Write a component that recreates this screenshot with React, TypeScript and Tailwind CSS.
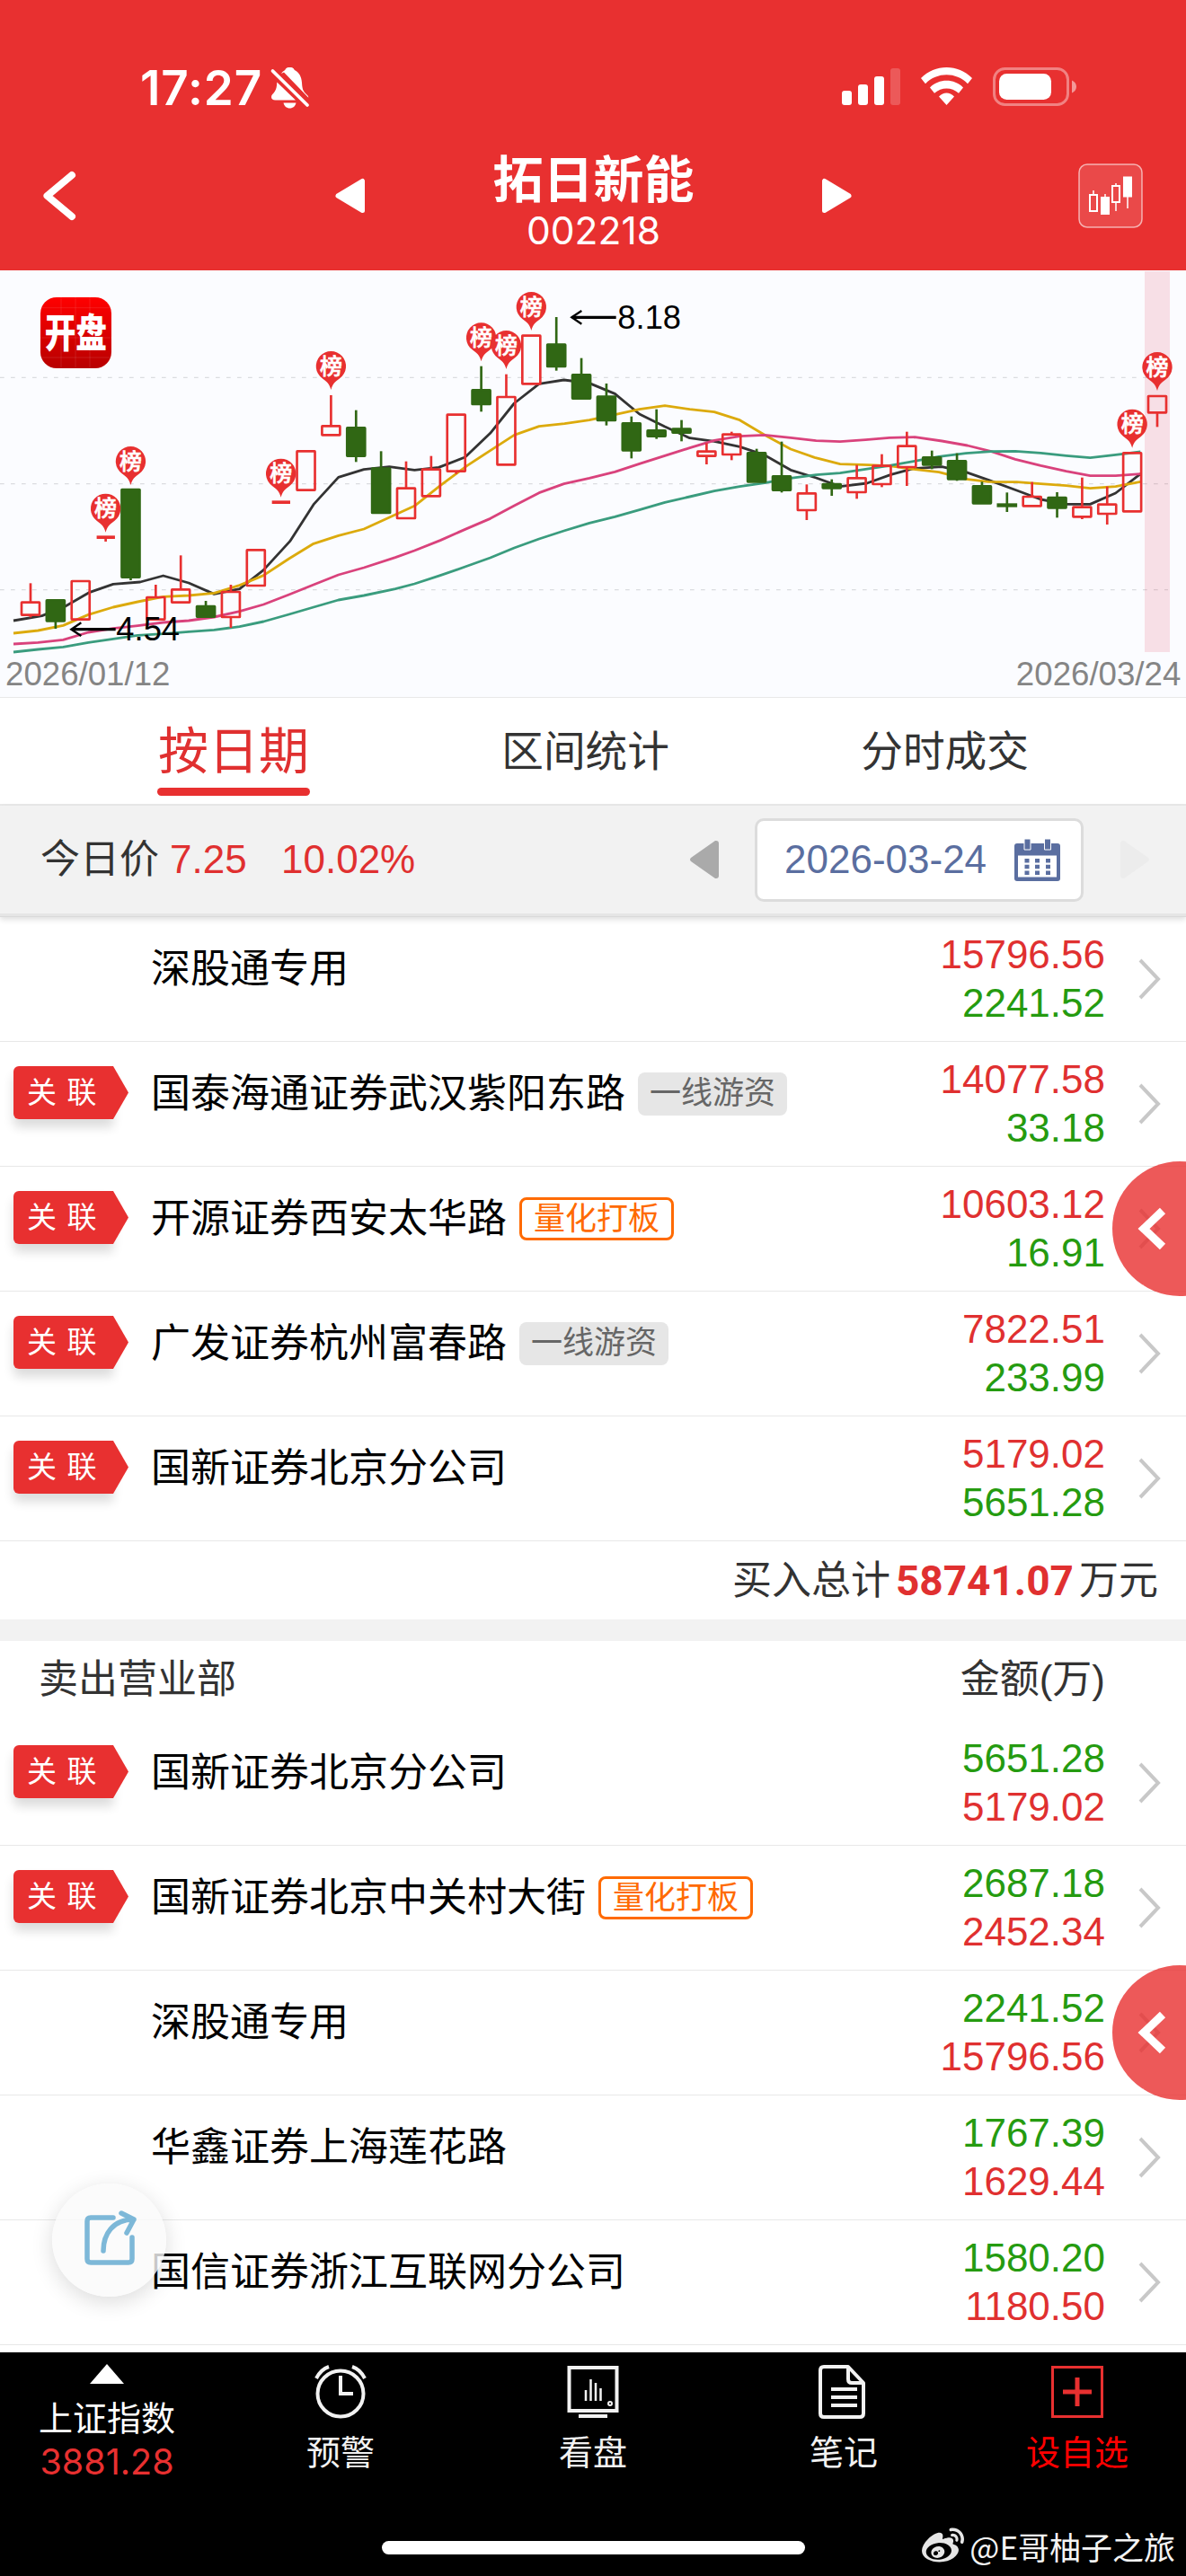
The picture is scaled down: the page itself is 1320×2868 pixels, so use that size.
import type { ReactNode } from 'react'
import { FaWeibo } from 'react-icons/fa'

type Candle = {
  up: boolean
  top: number
  bottom: number
  high?: number
  low?: number
}

type Seat = {
  name: string
  linked?: boolean
  tag?: 'hot' | 'quant'
  main: string
  other: string
}

// chart units are a third of a pixel
const STEP = 83.6
const FIRST = 102

const r = (top: number, bottom: number, high?: number, low?: number): Candle => ({ up: true, top, bottom, high, low })
const g = (top: number, bottom: number, high?: number, low?: number): Candle => ({ up: false, top, bottom, high, low })

const candles: Candle[] = [
  r(1108, 1158, 1048, 1162), g(1101, 1178, 1101, 1200), r(1037, 1173), r(889, 900, 889, 909), g(731, 1032, 731, 1038),
  r(1091, 1173, 1053), r(1065, 1116, 955), g(1121, 1164, 1107), r(1073, 1165, 1053, 1197), r(933, 1060),
  r(772, 783), r(603, 741), r(519, 557, 420), g(525, 627, 470, 643), g(661, 817, 607),
  r(727, 835, 641), r(664, 761, 623), r(481, 678, 481, 683), g(399, 454, 323, 475), r(422, 656, 350),
  r(217, 386), g(247, 328, 159, 338), g(348, 435, 296), g(421, 508, 381, 521), g(510, 608, 491, 631),
  g(534, 561, 467, 566), g(529, 549, 503, 574), r(604, 627, 580, 651), r(547, 622, 542, 637), g(609, 713, 599),
  g(687, 741, 575, 745), r(744, 808, 718, 837), g(713, 734, 701, 756), r(693, 748, 653, 766), r(652, 721, 617, 727),
  r(586, 664, 542, 723), g(624, 656, 605, 667), g(636, 704, 614, 706), g(720, 785, 709), g(781, 794, 745, 810),
  r(755, 794, 710), g(758, 800, 744, 829), r(790, 830, 695, 834), r(781, 820, 725, 852), r(609, 812), r(419, 482, 419, 526),
]

const pins = [
  [3, 878], [4, 720], [10, 761], [12, 402], [18, 307], [19, 333], [20, 204], [44, 596], [45, 405],
]

const averages = [
  {
    color: '#333333',
    points: '45,1173 140,1157 213,1128 300,1078 378,1051 468,1044 545,1023 630,1047 715,1084 800,1067 880,1004 968,908 1047,785 1130,694 1215,668 1300,659 1384,670 1465,661 1553,627 1637,547 1717,447 1800,382 1883,369 1968,380 2053,415 2135,483 2220,525 2303,563 2385,574 2470,592 2553,620 2640,670 2725,696 2805,725 2895,714 2975,685 3050,665 3145,659 3225,677 3300,703 3395,738 3475,768 3560,784 3640,784 3725,747 3808,683',
  },
  {
    color: '#dcaa0c',
    points: '45,1215 127,1206 211,1189 295,1153 378,1128 460,1110 545,1093 630,1089 715,1081 800,1055 880,1022 965,966 1047,916 1130,889 1215,867 1320,819 1384,790 1470,722 1560,655 1637,605 1717,553 1800,524 1885,515 1968,503 2053,485 2135,467 2220,455 2303,467 2385,476 2470,503 2553,553 2640,600 2720,628 2805,650 2900,653 2980,657 3050,667 3135,677 3225,700 3300,709 3395,710 3475,716 3560,722 3640,731 3725,725 3808,709',
  },
  {
    color: '#d9427c',
    points: '45,1251 127,1246 211,1237 295,1212 378,1199 460,1190 545,1179 630,1173 715,1161 800,1142 880,1119 965,1086 1047,1053 1130,1020 1215,996 1320,962 1384,939 1470,905 1553,868 1637,832 1717,789 1800,746 1883,716 1968,697 2053,676 2135,649 2220,622 2303,596 2385,571 2470,557 2553,553 2640,562 2725,572 2805,575 2890,569 2970,562 3055,560 3145,573 3230,588 3310,608 3390,634 3475,655 3560,674 3640,689 3725,689 3808,683',
  },
  {
    color: '#3a9c7e',
    points: '45,1278 127,1269 211,1261 295,1246 378,1234 460,1222 545,1217 630,1210 715,1204 800,1193 880,1176 965,1152 1047,1128 1130,1104 1215,1089 1320,1067 1384,1050 1470,1022 1553,993 1637,963 1717,930 1800,900 1883,873 1968,847 2053,826 2135,803 2220,778 2303,759 2385,740 2470,725 2553,713 2640,697 2725,686 2805,680 2890,667 2970,655 3050,641 3135,625 3225,614 3310,608 3390,607 3475,613 3560,622 3640,629 3725,619 3808,609',
  },
]

const buyers: Seat[] = [
  { name: '深股通专用', main: '15796.56', other: '2241.52' },
  { name: '国泰海通证券武汉紫阳东路', linked: true, tag: 'hot', main: '14077.58', other: '33.18' },
  { name: '开源证券西安太华路', linked: true, tag: 'quant', main: '10603.12', other: '16.91' },
  { name: '广发证券杭州富春路', linked: true, tag: 'hot', main: '7822.51', other: '233.99' },
  { name: '国新证券北京分公司', linked: true, main: '5179.02', other: '5651.28' },
]

const sellers: Seat[] = [
  { name: '国新证券北京分公司', linked: true, main: '5651.28', other: '5179.02' },
  { name: '国新证券北京中关村大街', linked: true, tag: 'quant', main: '2687.18', other: '2452.34' },
  { name: '深股通专用', main: '2241.52', other: '15796.56' },
  { name: '华鑫证券上海莲花路', main: '1767.39', other: '1629.44' },
  { name: '国信证券浙江互联网分公司', main: '1580.20', other: '1180.50' },
]

function StatusBar() {
  return (
    <div className="flex h-[136px] items-start justify-between pl-[156px] pr-[121px] pt-[72px]">
      <div className="flex items-start">
        <span className="w-[144px] whitespace-nowrap font-['Inter'] text-[53px] font-semibold leading-[52px] tracking-[0.9px]">17:27</span>
        <svg width="46" height="50" viewBox="0 0 46 50" fill="#fff">
          <path d="M13 10c1-2 3-3.200 4.200-4C18 3.500 20.300 3 22.500 3s4.500.5 5.300 3c5 2.500 7.700 7 8.200 14 .4 7 1.200 9.500 5.500 13.500 1.200 1.200 1.800 2 1.800 3.200L16 8.500z" />
          <path d="M8.300 19.500 29 39.500H6.500C3.500 39.500 2 38 2 36c0-2.500 2-3.500 3.700-6 2-2.800 2.300-6 2.600-10.500z" />
          <path d="M15.500 42.500h14c-.8 3.700-3.400 6-7 6s-6.200-2.300-7-6z" />
          <path d="M4 7 42 45" stroke="#e83030" strokeWidth="8" />
          <path d="M3.500 7 42 45" stroke="#fff" strokeWidth="3.800" strokeLinecap="round" />
        </svg>
      </div>
      <svg width="262" height="46" viewBox="0 0 262 46" fill="#fff">
        <rect x="0" y="29" width="11" height="16" rx="3" />
        <rect x="18" y="22" width="11" height="23" rx="3" />
        <rect x="36" y="13" width="11" height="32" rx="3" />
        <rect x="54" y="4" width="11" height="41" rx="3" opacity="0.2" />
        <path d="M88 15c15.500-16 41.500-16 57 0l-5 6.200c-13-13.200-34-13.200-47 0z" />
        <path d="M98 25.500c10-10.200 27-10.200 37 0l-5 6.300c-8-7-19-7-27 0z" />
        <path d="M108 35.500c5-5.200 12-5.200 17 0l-8.500 9.500z" />
        <rect x="169.500" y="4.500" width="82" height="40" rx="12" fill="none" stroke="#fff" strokeOpacity="0.400" strokeWidth="3" />
        <rect x="175" y="10" width="58" height="29" rx="8.500" />
        <path d="M256 17.500c3 1.200 5 4 5 7s-2 5.800-5 7z" opacity="0.500" />
      </svg>
    </div>
  )
}

function TitleBar() {
  return (
    <div className="flex h-[165px] items-start">
      <svg className="ml-[46px] mt-[53px]" width="40" height="58" viewBox="0 0 40 58" fill="none" stroke="#fff" strokeWidth="8" strokeLinecap="round" strokeLinejoin="round">
        <path d="M34 6 6.500 29 34 52" />
      </svg>
      <svg className="ml-[286px] mt-[62px]" width="36" height="40" viewBox="0 0 36 40" fill="#fff" stroke="#fff" strokeWidth="5" strokeLinejoin="round">
        <path d="M31.500 3.500v33L4 20z" />
      </svg>
      <div className="flex w-[505px] flex-col items-center">
        <h1 className="mt-[35px] text-[56px] font-bold leading-[60px]">拓日新能</h1>
        <p className="mt-[4px] font-['Inter'] text-[42.500px] font-normal leading-[44px]">002218</p>
      </div>
      <svg className="mt-[62px]" width="36" height="40" viewBox="0 0 36 40" fill="#fff" stroke="#fff" strokeWidth="5" strokeLinejoin="round">
        <path d="M4.500 3.500v33L32 20z" />
      </svg>
      <svg className="ml-[251px] mt-[46px]" width="73" height="73" viewBox="0 0 73 73" fill="none" stroke="#fff" strokeWidth="2">
        <rect x="1" y="1" width="70" height="70" rx="9" fill="#fff" fillOpacity="0.120" strokeOpacity="0.600" strokeWidth="1.500" />
        <path d="M17 30v5M30 34v5M42 22v3M42 43v10M55 36v14" strokeWidth="1.500" />
        <path d="M13 35h8v18h-8zM38 25h8v18h-8z" />
        <path d="M26 38h8v18h-8zM51 15.500h8v21h-8z" fill="#fff" />
      </svg>
    </div>
  )
}

function Pin({ x, tip }: { x: number; tip: number }) {
  return (
    <g transform={`translate(${x} ${tip})`}>
      <path d="M0 0C-6-22-14-27-30-39A50 50 0 1 1 30-39C14-27 6-22 0 0z" fill="#e83030" />
      <text x="0" y="-52" textAnchor="middle" fontSize="75" fontWeight="500" fill="#fff" stroke="#fff" strokeWidth="2">榜</text>
    </g>
  )
}

function CandleMark({ candle, x }: { candle: Candle; x: number }) {
  const { up, top, bottom, high = top, low = bottom } = candle
  const color = up ? '#e83030' : '#306714'
  const flat = bottom - top < 15

  return (
    <g stroke={color} strokeWidth="8">
      {high < top && <path d={`M${x} ${high}V${top + 4}`} />}
      {low > bottom && <path d={`M${x} ${bottom - 4}V${low}`} />}
      {flat ? (
        <path d={`M${x - (up ? 30 : 34)} ${(top + bottom) / 2}h${up ? 61 : 68}`} strokeWidth={bottom - top} />
      ) : (
        <rect x={x - 30} y={top + 4} width="60" height={bottom - top - 8} rx="1" fill={up ? 'none' : color} strokeLinejoin="round" />
      )}
    </g>
  )
}

function KLineChart() {
  return (
    <svg className="block bg-[#fbfcff]" width="1320" height="475" viewBox="0 3 3960 1425" fill="none">
      <defs>
        <linearGradient id="logo" x1="0" y1="0" x2="0" y2="1">
          <stop offset="0" stopColor="#ff0000" />
          <stop offset="1" stopColor="#b80000" />
        </linearGradient>
      </defs>

      {[361, 716, 1070].map((y) => (
        <path key={y} d={`M0 ${y}H3900`} stroke="#dadce0" strokeWidth="4" strokeDasharray="14 22" />
      ))}
      <rect x="3822" y="6" width="84" height="1272" fill="#e0304c" fillOpacity="0.140" />

      {averages.map((line) => (
        <polyline key={line.color} points={line.points} stroke={line.color} strokeWidth="8.500" strokeLinejoin="round" />
      ))}
      {candles.map((candle, i) => (
        <CandleMark key={i} candle={candle} x={FIRST + STEP * i} />
      ))}
      {pins.map(([i, tip]) => (
        <Pin key={i} x={FIRST + STEP * i} tip={tip} />
      ))}

      <g stroke="#000" strokeWidth="10">
        <path d="M2057 160H1910" />
        <path d="M1942 138 1909 160l33 22" strokeWidth="7" />
        <path d="M386 1202H240" />
        <path d="M271 1180 238 1202l33 22" strokeWidth="7" />
      </g>
      <g fontSize="109" fill="#000">
        <text x="2062" y="197">8.18</text>
        <text x="388" y="1239">4.54</text>
      </g>
      <g fontSize="110" fill="#858585">
        <text x="18" y="1388">2026/01/12</text>
        <text x="3943" y="1388" textAnchor="end">2026/03/24</text>
      </g>

      <rect x="135" y="93" width="237" height="237" rx="54" fill="url(#logo)" />
      <path d="M204 93v237M252 93v237M300 93v237M135 128h237M135 228h237M135 294h237" stroke="#fff" strokeOpacity="0.100" strokeWidth="3" />
      <text transform="translate(253 261) scale(1 1.270)" textAnchor="middle" fontSize="104" fontWeight="900" fill="#fff">开盘</text>
    </svg>
  )
}

function DateBar() {
  return (
    <div className="relative z-10 border-b border-[#d9d9d9] bg-[#e6e6e6] pb-[3px] shadow-[0_3px_6px_rgba(0,0,0,0.12)]">
      <div className="flex h-[120px] items-center bg-[#f2f2f2] text-[44px] leading-[60px]">
        <span className="ml-[45px] w-[144px] text-[#333]">今日价</span>
        <span className="w-[124px] text-[#e03030]">7.25</span>
        <span className="w-[455px] text-[#e03030]">10.02%</span>
        <svg width="32" height="42" viewBox="0 0 32 42" fill="#aaa">
          <path d="M28 0h1q3 0 3 3v36q0 3-3 3h-1L1 23q-2-2 0-4z" />
        </svg>
        <div className="ml-[40px] flex h-[93px] w-[366px] items-center justify-between rounded-[10px] border-[3px] border-[#dcdcdc] bg-white pl-[30px] pr-[23px] text-[#5a6ea0]">
          2026-03-24
          <svg width="51" height="47" viewBox="0 0 51 47">
            <rect x="0" y="5" width="51" height="42" rx="3" fill="#5a6ea0" />
            <path d="M4 18.500h43v24H4z" fill="#fff" />
            <path d="M11 0h7v12h-7zM33.500 0h7v12h-7z" fill="#5a6ea0" stroke="#fff" strokeWidth="1" />
            <path d="M14 22v20M25.500 22v20M37.500 22v20" stroke="#5a6ea0" strokeWidth="5" strokeDasharray="4.500 2.300" />
          </svg>
        </div>
        <svg className="ml-[41px]" width="32" height="42" viewBox="0 0 32 42" fill="#ececec">
          <path d="M4 0H3Q0 0 0 3v36q0 3 3 3h1l27-19q2-2 0-4z" />
        </svg>
      </div>
    </div>
  )
}

function SeatRow({ seat, sell }: { seat: Seat; sell?: boolean }) {
  const red = 'text-[#e03030]'
  const green = 'text-[#259b10]'

  return (
    <li className="flex h-[139px] items-center border-b border-[#e8e8e8]">
      <div className="mb-[25px] ml-[15px] w-[153px]">
        {seat.linked && (
          <div className="w-[111px] rounded-l-[6px] shadow-[0_9px_12px_rgba(0,0,0,0.14)]">
            <div className="h-[59px] w-[128px] rounded-l-[6px] bg-[#e83030] pl-[15px] text-[33px] leading-[60px] tracking-[11.500px] text-white [clip-path:polygon(0_0,111px_0,100%_50%,111px_100%,0_100%)]">
              关联
            </div>
          </div>
        )}
      </div>
      <div className="mb-[23px] flex flex-1 items-center whitespace-nowrap text-[44px] leading-[60px] text-black">
        {seat.name}
        {seat.tag === 'hot' && (
          <span className="ml-[14px] h-[48px] rounded-[8px] bg-[#e6e6e6] px-[13px] text-[35px] leading-[46px] text-[#666]">一线游资</span>
        )}
        {seat.tag === 'quant' && (
          <span className="ml-[14px] h-[48px] rounded-[8px] border-[3px] border-[#ff6a00] px-[13px] text-[35px] leading-[42px] text-[#ff6a00]">量化打板</span>
        )}
      </div>
      <div className="text-right text-[44px] leading-[54px]">
        <p className={sell ? green : red}>{seat.main}</p>
        <p className={sell ? red : green}>{seat.other}</p>
      </div>
      <svg className="ml-[36px] mr-[27px]" width="27" height="46" viewBox="0 0 27 46" fill="none" stroke="#c8c8c8" strokeWidth="4">
        <path d="M3 2 23 23 3 44" />
      </svg>
    </li>
  )
}

function SideHandle({ className }: { className: string }) {
  return (
    <div className={`absolute right-0 z-10 h-[150px] w-[82px] overflow-hidden ${className}`}>
      <div className="flex h-[150px] w-[150px] items-center rounded-full bg-[#e83030]/80 pl-[28px]">
        <svg width="32" height="48" viewBox="0 0 32 48" fill="none" stroke="#fff" strokeWidth="9">
          <path d="M28 4 7 24l21 20" />
        </svg>
      </div>
    </div>
  )
}

function NavItem({ width, label, color = 'text-[#f2f2f2]', children }: { width: string; label: string; color?: string; children: ReactNode }) {
  return (
    <div className={`flex flex-col items-center pt-[14px] ${width} ${color}`}>
      <svg width="60" height="60" viewBox="0 0 60 60" fill="none" stroke="currentColor" strokeWidth="4">
        {children}
      </svg>
      <span className="mt-[14px] text-[38px] leading-[48px]">{label}</span>
    </div>
  )
}

function BottomNav() {
  return (
    <nav className="relative flex h-[249px] bg-black">
      <div className="flex w-[238px] flex-col items-center pt-[13px]">
        <svg width="38" height="22" viewBox="0 0 38 22" fill="#fff">
          <path d="M19 0 38 22H0z" />
        </svg>
        <span className="mt-[15px] text-[38px] leading-[48px] text-white">上证指数</span>
        <span className="font-['Inter'] text-[39.500px] font-normal leading-[48px] text-[#e83030]">3881.28</span>
      </div>
      <NavItem width="w-[282px]" label="预警">
        <circle cx="30" cy="32" r="25.500" />
        <path d="M30 12v20h14M3 15Q8 5 17 2M57 15Q52 5 43 2" />
      </NavItem>
      <NavItem width="w-[280px]" label="看盘">
        <path d="M3.500 3h53v48h-53zM14 57h32" />
        <path d="M22 28v12M27.500 16v24M33 20v20M38.500 26v14" strokeWidth="2.500" />
        <circle cx="49" cy="43" r="1" />
      </NavItem>
      <NavItem width="w-[278px]" label="笔记">
        <path d="M8 2h27l17 18v34q0 4-4 4H8q-4 0-4-4V6q0-4 4-4zM35 2v14q0 4 4 4h13M16 27h29M16 36h29M16 45h29" strokeWidth="4" strokeLinejoin="round" />
      </NavItem>
      <NavItem width="w-[242px]" label="设自选" color="text-[#ff0000]">
        <path d="M2.500 2.500h55v55h-55z" stroke="#e83030" strokeWidth="3" />
        <path d="M30 14v32M14 30h32" stroke="#e83030" strokeWidth="5" />
      </NavItem>
      <div className="absolute left-[425px] top-[210px] h-[15px] w-[471px] rounded-full bg-white" />
      <div className="absolute right-[12px] top-[192px] flex items-center gap-[6px] whitespace-nowrap text-[#e6e6e6]">
        <FaWeibo className="h-[48px] w-[47px]" />
        <span className="font-['Noto_Sans_CJK_SC'] text-[35px] leading-[48px] text-[#f4f4f4]">@E哥柚子之旅</span>
      </div>
    </nav>
  )
}

export default function App() {
  return (
    <div className="relative h-[2868px] w-[1320px] overflow-hidden bg-white font-['Liberation_Sans','Noto_Sans_CJK_SC',sans-serif]">
      <header className="bg-[#e83030] text-white">
        <StatusBar />
        <TitleBar />
      </header>

      <KLineChart />

      <div className="flex h-[121px] items-start justify-between border-b-2 border-t border-[#e9e9e9] px-[175px] text-[46.700px] leading-[60px] text-[#333]">
        <div className="text-[56px] text-[#e03030]">
          <div className="mt-[30px] text-center">按日期</div>
          <div className="mt-[10px] h-[9px] w-[170px] rounded-full bg-[#e83030]" />
        </div>
        <div className="mt-[30px]">区间统计</div>
        <div className="mt-[30px]">分时成交</div>
      </div>

      <DateBar />

      <ul>
        {buyers.map((seat) => (
          <SeatRow key={seat.name} seat={seat} />
        ))}
      </ul>
      <div className="flex h-[87px] items-center justify-end pr-[31px] pt-px text-[44px] leading-[60px] text-[#333]">
        买入总计
        <span className="ml-[6px] mr-[6px] font-['Roboto'] text-[46px] font-bold text-[#e03030]">58741.07</span>
        万元
      </div>

      <div className="h-[24px] bg-[#f2f2f2]" />

      <div className="flex h-[89px] items-center justify-between pb-[3px] pl-[43px] pr-[90px] text-[44px] leading-[60px] text-[#333]">
        <span>卖出营业部</span>
        <span>金额(万)</span>
      </div>
      <ul className="mb-[8px]">
        {sellers.map((seat) => (
          <SeatRow key={seat.name} seat={seat} sell />
        ))}
      </ul>

      <BottomNav />

      <SideHandle className="top-[1293px]" />
      <SideHandle className="top-[2188px]" />

      <div className="absolute left-[58px] top-[2431px] flex h-[126px] w-[127px] items-center justify-center rounded-full bg-[#fafafa]/80 pb-[4px] shadow-[0_6px_24px_rgba(0,0,0,0.14)]">
        <svg width="60" height="64" viewBox="0 0 60 64" fill="none" stroke="#7db8d8" strokeWidth="5.500" strokeLinecap="round" strokeLinejoin="round">
          <path d="M34 9H9q-4 0-4 4v42q0 4 4 4h42q4 0 4-4V31" />
          <path d="M23 46C23 28 33 11 57 11M43 4l14 7-8 15" />
        </svg>
      </div>
    </div>
  )
}
